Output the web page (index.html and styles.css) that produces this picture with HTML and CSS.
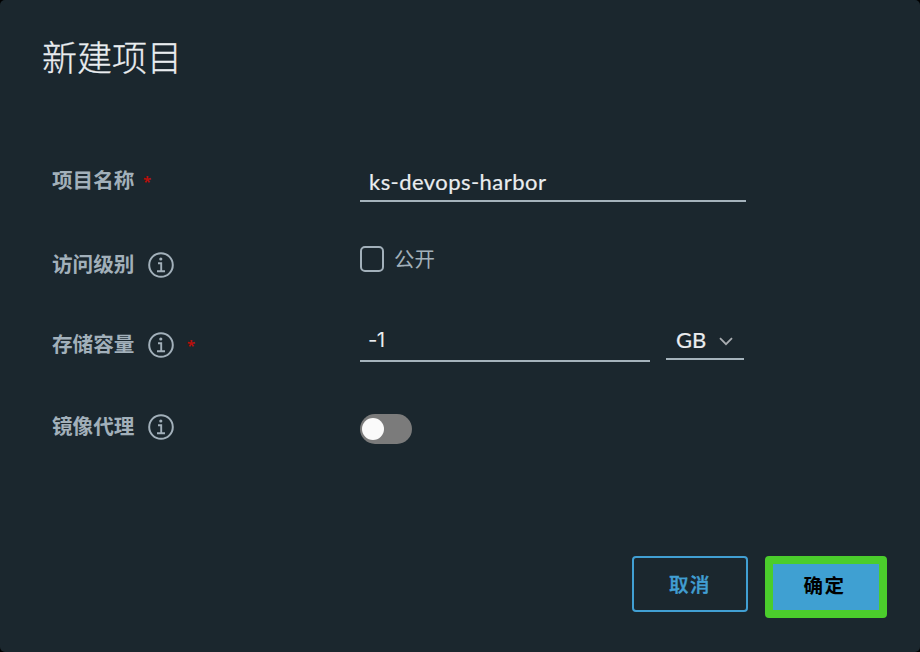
FILE: index.html
```
<!DOCTYPE html>
<html lang="zh-CN">
<head>
<meta charset="utf-8">
<title>新建项目</title>
<link rel="stylesheet" href="styles.css">
</head>
<body>
<svg width="0" height="0" class="defs" aria-hidden="true">
  <symbol id="info" viewBox="0 0 26 26">
    <circle cx="13" cy="13" r="11.8" fill="none" stroke="currentColor" stroke-width="2"/>
    <circle cx="12.8" cy="7" r="1.6" fill="currentColor"/>
    <path d="M10 11.2h3.2v8M9 19.2h8" fill="none" stroke="currentColor" stroke-width="1.9"/>
  </symbol>
</svg>
<main class="modal">
  <h1 class="title">新建项目</h1>
  <form class="form">
    <div class="row name-row">
      <div class="label"><span class="label-text">项目名称</span><span class="required">*</span></div>
      <div class="field name-field"><span class="name-value">ks-devops-harbor</span></div>
    </div>
    <div class="row access-row">
      <div class="label"><span class="label-text">访问级别</span><svg class="info"><use href="#info"/></svg></div>
      <div class="check"><span class="box"></span><span>公开</span></div>
    </div>
    <div class="row quota-row">
      <div class="label"><span class="label-text">存储容量</span><svg class="info"><use href="#info"/></svg><span class="required">*</span></div>
      <div class="quota">
        <div class="field quota-field"><span>-1</span></div>
        <div class="select"><span>GB</span><svg class="chevron" viewBox="0 0 14 9"><path d="M1 1.2l6 6 6-6"/></svg></div>
      </div>
    </div>
    <div class="row proxy-row">
      <div class="label"><span class="label-text">镜像代理</span><svg class="info"><use href="#info"/></svg></div>
      <div class="toggle"><span class="knob"></span></div>
    </div>
  </form>
  <footer class="footer">
    <button class="btn cancel">取消</button>
    <button class="btn confirm">确定</button>
  </footer>
</main>
</body>
</html>
```
FILE: styles.css
```
* { box-sizing: border-box; }
body {
  margin: 0;
  background: #000;
  font-family: Lato, "Noto Sans CJK SC", sans-serif;
  color: #eaedf0;
}
.defs { display: block; }
.modal {
  width: 920px;
  height: 652px;
  padding: 33px 33px 34px 42px;
  background: #1b272e;
  border-radius: 5px;
  display: flex;
  flex-direction: column;
}
.title {
  margin: 0;
  height: 48px;
  font-size: 35px;
  line-height: 48px;
  font-weight: 300;
  -webkit-text-stroke: .3px currentColor;
}
.form { margin: 60px 0 0 10px; }
.row {
  display: grid;
  grid-template-columns: 308px 1fr;
  height: 82px;
  align-items: start;
}
.label {
  display: flex;
  align-items: center;
  height: 26px;
  color: #a2b0ba;
  font-size: 20.6px;
  font-weight: 700;
}
.name-row .label { margin-top: 27px; }
.access-row .label { margin-top: 29px; }
.quota-row .label { margin-top: 27px; }
.proxy-row .label { margin-top: 27px; }
.label-text { line-height: 26px; width: 83px; white-space: nowrap; margin-bottom: 2px; }
.info { width: 26px; height: 26px; margin-left: 13px; flex: none; }
.required {
  margin-left: 8px;
  color: #b5100c;
  font: 700 15px/26px "Noto Sans", sans-serif;
}
.info + .required { margin-left: 13px; }
.field {
  border-bottom: 2px solid #a5b3bc;
  padding-left: 9px;
  font-size: 22px;
  line-height: 36px;
  height: 38px;
}
.name-field { width: 386px; margin-top: 23px; }
.name-value { letter-spacing: .45px; -webkit-text-stroke: .2px currentColor; }
.check {
  display: flex;
  align-items: center;
  gap: 10px;
  height: 26px;
  margin-top: 23px;
  color: #a2b0ba;
  font-size: 20.4px;
  line-height: 26px;
}
.box {
  width: 24px;
  height: 26px;
  border: 2px solid #a2b0ba;
  border-radius: 5px;
}
.quota { display: flex; gap: 16px; margin-top: 17px; }
.quota-field {
  width: 290px;
  height: 40px;
  padding-left: 8px;
  font-family: Inter, sans-serif;
  font-size: 20.5px;
  letter-spacing: -.8px;
}
.select {
  width: 78px;
  height: 38px;
  border-bottom: 2px solid #a5b3bc;
  padding: 0 11px 0 10px;
  display: flex;
  align-items: center;
  justify-content: space-between;
  font-size: 22px;
  line-height: 26px;
  -webkit-text-stroke: .2px currentColor;
}
.chevron { width: 14px; height: 9px; margin-top: 3px; fill: none; stroke: #a9adb1; stroke-width: 1.8; }
.toggle {
  width: 52px;
  height: 30px;
  margin-top: 27px;
  padding: 4px 2px;
  border-radius: 15px;
  background: #7b7b7b;
}
.knob { display: block; width: 22px; height: 22px; border-radius: 50%; background: #fafafa; }
.footer {
  display: flex;
  align-items: flex-start;
  gap: 17px;
  justify-content: flex-end;
  margin-top: auto;
}
.btn {
  margin: 0;
  padding: 0;
  font: 500 19.5px/26px Lato, "Noto Sans CJK SC", sans-serif;
  letter-spacing: 1.5px;
}
.cancel {
  width: 116px;
  height: 56px;
  padding-top: 2px;
  color: #419fd3;
  background: transparent;
  border: 2px solid #419fd3;
  border-radius: 4px;
  -webkit-text-stroke: .4px currentColor;
}
.confirm {
  width: 122px;
  height: 62px;
  padding: 0 3px 2px 0;
  color: #000;
  background: #3fa0d2;
  border: 8px solid #4bcd2c;
  border-radius: 4px;
  font-weight: 700;
}
```
